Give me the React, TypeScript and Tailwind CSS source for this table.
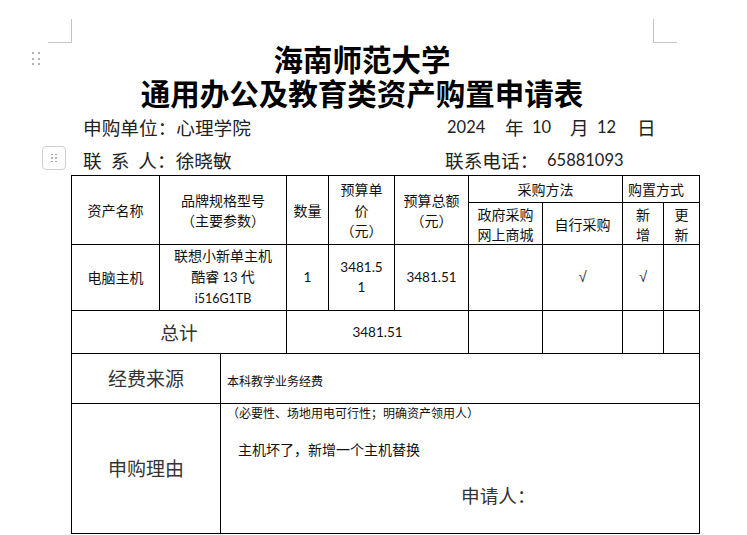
const cjk = "font-['Noto_Sans_CJK_SC',sans-serif]";
const num = "font-['Lato','Noto_Sans_CJK_SC',sans-serif]";

function Dots({ size, gap }: { size: string; gap: string }) {
  return (
    <div className={`grid grid-cols-2 ${gap}`}>
      {[0, 1, 2, 3, 4, 5].map((i) => (
        <span key={i} className={`${size} rounded-full bg-[#9a9a9a]`} />
      ))}
    </div>
  );
}

export default function App() {
  const td = "border border-black p-0 text-center align-middle";

  return (
    <div className={`relative w-[747px] h-[535px] overflow-hidden bg-white text-[#111] ${cjk}`}>
      {/* page margin marks */}
      <div className="absolute left-[48px] top-[19px] w-[24px] h-[24px] border-r border-b border-[#c4c4c4]" />
      <div className="absolute left-[653px] top-[19px] w-[24px] h-[24px] border-l border-b border-[#c4c4c4]" />

      {/* drag handles */}
      <div className="absolute left-[32px] top-[52px]">
        <Dots size="w-[2px] h-[2px]" gap="gap-x-[4px] gap-y-[3.5px]" />
      </div>
      <div className="absolute left-[42px] top-[146px] w-[24px] h-[24px] rounded-[4px] border border-[#d0d0d0] flex items-center justify-center">
        <Dots size="w-[1.5px] h-[1.5px]" gap="gap-x-[2.5px] gap-y-[2px]" />
      </div>

      <div className="pt-[41px]">
        <div className="ml-[71px] w-[582px] text-center font-bold text-[29.5px] leading-[34px] text-black">
          海南师范大学
          <br />
          通用办公及教育类资产购置申请表
        </div>

        {/* unit and date */}
        <div className="flex items-center h-[36px] pl-[83px] text-[18.67px] text-[#222] whitespace-nowrap">
          <span className="w-[364px]">申购单位：心理学院</span>
          <span className={`w-[58px] ${num} text-[16.5px]`}>2024</span>
          <span className="w-[27px]">年</span>
          <span className={`w-[38px] ${num} text-[16.5px]`}>10</span>
          <span className="w-[27px]">月</span>
          <span className={`w-[40px] ${num} text-[16.5px]`}>12</span>
          <span>日</span>
        </div>

        {/* contact */}
        <div className="flex items-center h-[30px] pl-[83px] text-[18.67px] text-[#222] whitespace-nowrap">
          <span className="w-[362px]">
            联<span className="ml-[9px]">系</span>
            <span className="ml-[9px]">人：徐晓敏</span>
          </span>
          <span className="w-[102px]">联系电话：</span>
          <span className={`${num} text-[16.5px]`}>65881093</span>
        </div>

        <table className="ml-[71px] w-[628px] table-fixed border-collapse text-[14px] leading-[20px]">
          <colgroup>
            <col className="w-[88px]" />
            <col className="w-[61px]" />
            <col className="w-[66px]" />
            <col className="w-[42px]" />
            <col className="w-[66px]" />
            <col className="w-[74px]" />
            <col className="w-[74px]" />
            <col className="w-[80px]" />
            <col className="w-[41px]" />
            <col className="w-[36px]" />
          </colgroup>
          <tbody>
            <tr className="h-[27px]">
              <td rowSpan={2} className={td}>资产名称</td>
              <td rowSpan={2} colSpan={2} className={td}>
                品牌规格型号
                <br />
                （主要参数）
              </td>
              <td rowSpan={2} className={td}>数量</td>
              <td rowSpan={2} className={`${td} leading-[20.5px]`}>
                预算单
                <br />
                价
                <br />
                （元）
              </td>
              <td rowSpan={2} className={td}>
                预算总额
                <br />
                （元）
              </td>
              <td colSpan={2} className={td}>采购方法</td>
              <td colSpan={2} className={`${td} text-left pl-[5px]`}>购置方式</td>
            </tr>
            <tr className="h-[42px]">
              <td className={td}>
                政府采购
                <br />
                网上商城
              </td>
              <td className={td}>自行采购</td>
              <td className={td}>
                新
                <br />
                增
              </td>
              <td className={td}>
                更
                <br />
                新
              </td>
            </tr>

            <tr className="h-[63px]">
              <td className={td}>电脑主机</td>
              <td colSpan={2} className={`${td} leading-[20.5px]`}>
                联想小新单主机
                <br />
                酷睿 <span className={`${num} text-[13px]`}>13</span> 代
                <br />
                <span className={`${num} text-[12.5px]`}>i516G1TB</span>
              </td>
              <td className={`${td} ${num} text-[13.5px]`}>1</td>
              <td className={`${td} ${num} text-[13.5px] leading-[20.5px]`}>
                3481.5
                <br />1
              </td>
              <td className={`${td} ${num} text-[13.5px]`}>3481.51</td>
              <td className={td}></td>
              <td className={`${td} font-['Liberation_Sans',sans-serif] text-[15px] text-[#334]`}>√</td>
              <td className={`${td} font-['Liberation_Sans',sans-serif] text-[15px] text-[#334]`}>√</td>
              <td className={td}></td>
            </tr>

            <tr className="h-[43px]">
              <td colSpan={3} className={`${td} text-[18.67px] text-[#333]`}>总计</td>
              <td colSpan={3} className={`${td} ${num} text-[13.5px]`}>3481.51</td>
              <td className={td}></td>
              <td className={td}></td>
              <td className={td}></td>
              <td className={td}></td>
            </tr>

            <tr className="h-[50px]">
              <td colSpan={2} className={`${td} text-[19px] text-[#333]`}>经费来源</td>
              <td colSpan={8} className={`${td} text-left pl-[6px] pt-[6px] text-[12px]`}>本科教学业务经费</td>
            </tr>

            <tr className="h-[130px]">
              <td colSpan={2} className={`${td} text-[19px] text-[#333]`}>申购理由</td>
              <td colSpan={8} className="border border-black p-0 align-top">
                <div className="flex flex-col pl-[6px] pt-[1px]">
                  <div className="h-[16px] leading-[16px] text-[12px]">（必要性、场地用电可行性；明确资产领用人）</div>
                  <div className="mt-[18px] ml-[11px] leading-[20px] text-[14px]">主机坏了，新增一个主机替换</div>
                  <div className="mt-[24px] ml-[234px] leading-[24px] text-[18.67px] text-[#333]">申请人：</div>
                </div>
              </td>
            </tr>
          </tbody>
        </table>
      </div>
    </div>
  );
}
